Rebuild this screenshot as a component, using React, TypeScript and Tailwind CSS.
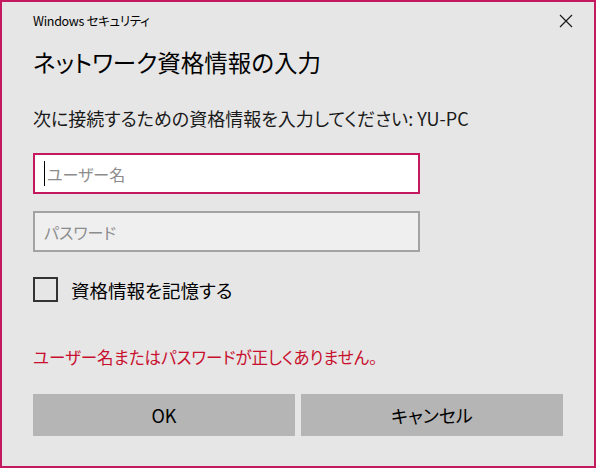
import React from "react";

const font = {
  fontFamily: '"Noto Sans CJK JP", "Noto Sans", sans-serif',
  fontFeatureSettings: '"palt"',
};

function TextBox({
  placeholder,
  focused,
}: {
  placeholder: string;
  focused?: boolean;
}) {
  const cls = focused
    ? "border-[#c5195f] bg-white"
    : "border-[#a3a3a3] bg-[#efefef]";
  return (
    <div
      className={`w-[387px] h-[41px] border-2 ${cls} flex items-center pl-[9px] text-[16px] text-[#8c8c8c]`}
    >
      {focused ? (
        <span className="w-px h-[25px] bg-black mr-[2px]" />
      ) : null}
      <span>{placeholder}</span>
    </div>
  );
}

export default function App() {
  return (
    <div
      style={font}
      className="w-[596px] h-[468px] border-2 border-[#c5195f] bg-[#e6e6e6] flex flex-col px-[31px] text-[#1a1a1a]"
    >
      <div className="h-[38px] flex items-center justify-between">
        <span className="text-[12.5px] tracking-[-0.3px] text-black">
          Windows セキュリティ
        </span>
        <button className="-mr-[10px] w-[14px] h-[14px] flex items-center justify-center">
          <svg viewBox="0 0 14 14" className="w-[14px] h-[14px]">
            <path
              d="M1 1 L13 13 M13 1 L1 13"
              stroke="#1a1a1a"
              strokeWidth="1.2"
              fill="none"
            />
          </svg>
        </button>
      </div>

      <h1 className="mt-[6px] text-[23.5px] leading-[32px] text-black">
        ネットワーク資格情報の入力
      </h1>

      <p className="mt-[28px] text-[18px] leading-[24px]">
        次に接続するための資格情報を入力してください: YU-PC
      </p>

      <div className="mt-[23px]">
        <TextBox placeholder="ユーザー名" focused />
      </div>
      <div className="mt-[17px]">
        <TextBox placeholder="パスワード" />
      </div>

      <label className="mt-[25px] flex items-center gap-[13px]">
        <span className="w-[25px] h-[25px] border-2 border-[#333333]" />
        <span className="text-[18.5px] leading-[24px] text-black">
          資格情報を記憶する
        </span>
      </label>

      <p className="mt-[43px] text-[16.5px] leading-[24px] text-[#c8102e]">
        ユーザー名またはパスワードが正しくありません。
      </p>

      <div className="mt-[25px] flex gap-[6px]">
        <button className="flex-1 h-[42px] bg-[#b5b5b5] text-[18px] text-black">
          OK
        </button>
        <button className="flex-1 h-[42px] bg-[#b5b5b5] text-[18px] text-black">
          キャンセル
        </button>
      </div>
    </div>
  );
}
